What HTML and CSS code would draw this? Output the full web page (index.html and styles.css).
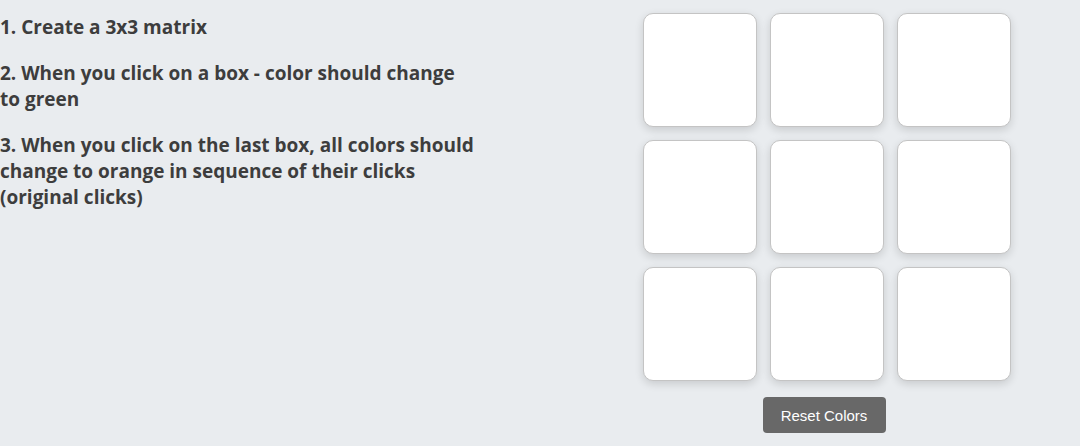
FILE: index.html
```html
<!DOCTYPE html>
<html>
<head>
<meta charset="utf-8">
<link rel="stylesheet" href="styles.css">
</head>
<body>
<div class="page">
  <div class="tasks">
    <p class="task">1. Create a 3x3 matrix</p>
    <p class="task">2. When you click on a box - color should change to green</p>
    <p class="task">3. When you click on the last box, all colors should change to orange in sequence of their clicks (original clicks)</p>
  </div>
  <div class="board">
    <div class="grid">
      <div class="box"></div><div class="box"></div><div class="box"></div>
      <div class="box"></div><div class="box"></div><div class="box"></div>
      <div class="box"></div><div class="box"></div><div class="box"></div>
    </div>
    <button class="reset">Reset Colors</button>
  </div>
</div>
</body>
</html>
```
FILE: styles.css
```css
html, body {
  margin: 0;
  padding: 0;
  background: #e9ecef;
}
body {
  width: 1080px;
  height: 446px;
  overflow: hidden;
}
.page {
  display: flex;
  justify-content: space-between;
  padding: 13px 69px 0 0;
}
.tasks {
  width: 475px;
  padding-top: 1px;
}
.task {
  margin: 0 0 20px 0;
  font-family: "Open Sans", sans-serif;
  font-weight: 700;
  font-size: 19px;
  line-height: 26px;
  color: #3d3d3d;
}
.board {
  display: flex;
  flex-direction: column;
  align-items: center;
  gap: 16px;
}
.grid {
  display: grid;
  grid-template-columns: repeat(3, 114px);
  grid-auto-rows: 114px;
  gap: 13px;
}
.box {
  box-sizing: border-box;
  background: #ffffff;
  border: 1px solid #c4c4c4;
  border-radius: 10px;
  box-shadow: 0 3px 9px rgba(0, 0, 0, 0.14);
}
.reset {
  width: 123px;
  height: 36px;
  margin-left: -6px;
  border: none;
  border-radius: 4px;
  background: #686868;
  color: #ffffff;
  font-family: "Liberation Sans", Arial, sans-serif;
  font-size: 15px;
  padding: 0;
}
```
